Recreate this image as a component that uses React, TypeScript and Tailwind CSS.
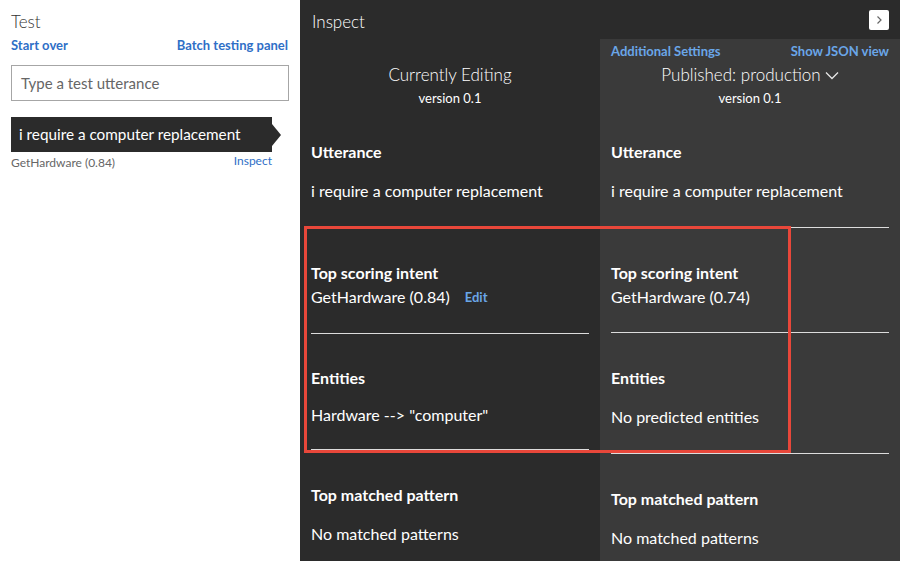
import React from 'react';

const font = "font-['Lato','Noto_Sans',sans-serif]";

const Divider: React.FC<{ className?: string }> = ({ className = '' }) => (
  <div className={`h-px bg-[#dcdcdc] ${className}`} />
);

const Label: React.FC<{ children: React.ReactNode; className?: string }> = ({ children, className = '' }) => (
  <div className={`text-[16px] leading-5 font-bold text-white ${className}`}>{children}</div>
);

const Value: React.FC<{ children: React.ReactNode; className?: string }> = ({ children, className = '' }) => (
  <div className={`text-[16px] leading-5 text-white ${className}`}>{children}</div>
);

const ColumnHead: React.FC<{ title: React.ReactNode }> = ({ title }) => (
  <div className="flex flex-col items-center">
    <div className="text-[17px] leading-6 font-light text-white flex items-center gap-1">{title}</div>
    <div className="mt-[2px] text-[13px] leading-[18px] text-white">version 0.1</div>
  </div>
);

const TestPanel: React.FC = () => (
  <div className="w-[300px] shrink-0 bg-white px-[11px]">
    <div className="pt-[10px] text-[17px] leading-6 font-light text-[#333]">Test</div>
    <div className="mt-[3px] flex justify-between text-[13px] leading-4 font-bold text-[#2f6fc7]">
      <span>Start over</span>
      <span className="mr-px">Batch testing panel</span>
    </div>
    <div className="mt-[12px] h-[36px] w-[278px] border border-[#a6a6a6] flex items-center px-[9px] text-[15px] text-[#666]">
      Type a test utterance
    </div>
    <div className="mt-[16px] flex items-center">
      <div className="h-[35px] w-[261px] bg-[#2b2b2b] flex items-center px-[8px] text-[15.3px] text-white">
        i require a computer replacement
      </div>
      <div className="w-0 h-0 border-y-[11px] border-y-transparent border-l-[9px] border-l-[#2b2b2b]" />
    </div>
    <div className="mt-[1px] w-[261px] flex justify-between items-start">
      <span className="mt-[2px] text-[12px] leading-4 text-[#666]">GetHardware (0.84)</span>
      <span className="text-[12px] leading-4 text-[#2f6fc7]">Inspect</span>
    </div>
  </div>
);

const InspectPanel: React.FC = () => (
  <div className="relative flex-1 bg-[#2b2b2b] flex flex-col">
    <div className="h-[39px] flex items-start justify-between pl-[12px] pr-[11px]">
      <div className="pt-[10px] text-[17px] leading-6 font-light text-white">Inspect</div>
      <button className="mt-[10px] w-[20px] h-[20px] bg-white rounded-[2px] flex items-center justify-center">
        <svg width="10" height="10" viewBox="0 0 10 10" fill="none" stroke="#666" strokeWidth="1.2">
          <path d="M3.5 1.5 L7 5 L3.5 8.5" />
        </svg>
      </button>
    </div>
    <div className="flex-1 grid grid-cols-2">
      {/* currently editing */}
      <div className="px-[11px]">
        <div className="h-[24px]" />
        <ColumnHead title="Currently Editing" />
        <Label className="mt-[35px]">Utterance</Label>
        <Value className="mt-[19px]">i require a computer replacement</Value>
        <Divider className="mt-[26px]" />
        <Label className="mt-[35px]">Top scoring intent</Label>
        <Value className="mt-[4px] flex items-center">
          GetHardware (0.84)
          <span className="ml-[15px] text-[13px] font-bold text-[#6aa6e8]">Edit</span>
        </Value>
        <Divider className="mt-[26px]" />
        <Label className="mt-[34px]">Entities</Label>
        <Value className="mt-[17px]">Hardware --&gt; "computer"</Value>
        <Divider className="mt-[24px]" />
        <Label className="mt-[35px]">Top matched pattern</Label>
        <Value className="mt-[19px]">No matched patterns</Value>
      </div>
      {/* published */}
      <div className="bg-[#3a3a3a] px-[11px]">
        <div className="h-[24px] pt-px flex items-center justify-between text-[13px] font-bold text-[#6aa6e8]">
          <span>Additional Settings</span>
          <span>Show JSON view</span>
        </div>
        <ColumnHead
          title={
            <>
              Published: production
              <svg width="14" height="9" viewBox="0 0 14 9" fill="none" stroke="#e6e6e6" strokeWidth="1.3">
                <path d="M1 1.5 L7 7.5 L13 1.5" />
              </svg>
            </>
          }
        />
        <Label className="mt-[35px]">Utterance</Label>
        <Value className="mt-[19px]">i require a computer replacement</Value>
        <Divider className="mt-[26px]" />
        <Label className="mt-[35px]">Top scoring intent</Label>
        <Value className="mt-[4px]">GetHardware (0.74)</Value>
        <Divider className="mt-[25px]" />
        <Label className="mt-[35px]">Entities</Label>
        <Value className="mt-[19px]">No predicted entities</Value>
        <Divider className="mt-[26px]" />
        <Label className="mt-[35px]">Top matched pattern</Label>
        <Value className="mt-[19px]">No matched patterns</Value>
      </div>
    </div>
    {/* highlight annotation */}
    <div className="absolute left-[4px] top-[226px] w-[487px] h-[227px] border-[3px] border-[#e8473a] pointer-events-none" />
  </div>
);

export default function App() {
  return (
    <div className={`flex w-[900px] h-[561px] overflow-hidden ${font}`}>
      <TestPanel />
      <InspectPanel />
    </div>
  );
}
